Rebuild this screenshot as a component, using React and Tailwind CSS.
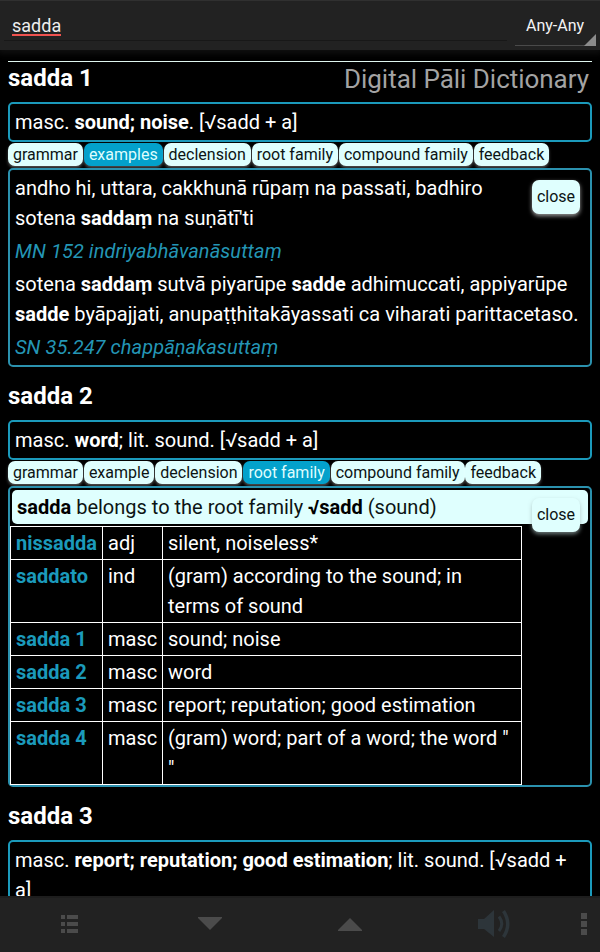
import React from "react";

function Heading({ children, className = "" }) {
  return <h3 className={`text-[24px] leading-[30px] font-bold text-white ${className}`}>{children}</h3>;
}

function Summary({ children }) {
  return (
    <div className="rounded-[5px] border-2 border-[#1b9abb] px-[5px] py-[3px] text-[20px] leading-[30px]">
      {children}
    </div>
  );
}

function Tabs({ items, active }) {
  return (
    <div className="mt-px mb-[2px] flex h-[23px] gap-[0.9px]">
      {items.map((t) => (
        <button
          key={t}
          className={`h-[23px] rounded-[7px] px-[5px] text-[16px] leading-[23px] whitespace-nowrap shadow-[0_2px_3px_rgba(255,255,255,0.3)] ${
            t === active ? "bg-[#03a1cb] text-[#dffdfd]" : "bg-[#dffffe] text-[#0c1414]"
          }`}
        >
          {t}
        </button>
      ))}
    </div>
  );
}

function Close({ className }) {
  return (
    <button
      className={`absolute right-[10px] flex h-[34px] w-[48px] items-start justify-center rounded-[7px] bg-[#dffffe] pt-[5px] text-[16px] leading-[24px] text-[#0c1414] ${className}`}
    >
      close
    </button>
  );
}

const rows = [
  ["nissadda", "adj", "silent, noiseless*"],
  ["saddato", "ind", "(gram) according to the sound; in terms of sound"],
  ["sadda 1", "masc", "sound; noise"],
  ["sadda 2", "masc", "word"],
  ["sadda 3", "masc", "report; reputation; good estimation"],
  ["sadda 4", "masc", '(gram) word; part of a word; the word " "'],
];

export default function App() {
  return (
    <div className="flex h-[952px] w-[600px] flex-col overflow-hidden bg-black font-['Roboto','Noto_Sans',sans-serif] text-white">
      <header className="relative z-10 flex h-[50px] shrink-0 border-t border-[#303030] bg-[#222222] shadow-[0_2px_6px_2px_rgba(34,34,34,0.45)]">
        <div className="ml-1 flex h-[40px] w-[503px] border-b border-[#181818] pt-[13px] pl-2">
          <span className="h-[22px] border-b-2 border-[#ef5350] text-[18px] leading-[24px] text-[#eeeeee]">sadda</span>
        </div>
        <div className="relative ml-2 h-[45px] w-[81px] border-b border-[#4a4a4a] pt-[13px] pl-[11px] text-[16px] leading-[24px] whitespace-nowrap text-[#f4f4f4]">
          Any-Any
          <svg className="absolute right-0 -bottom-px" width="12" height="12" viewBox="0 0 12 12">
            <path d="M12 0V12H0Z" fill="#8c8c8c" />
          </svg>
        </div>
      </header>

      <main className="min-h-0 flex-1 overflow-hidden px-2 pt-[11px]">
        <div className="flex h-[41px] justify-between border-t border-[#dff5ee]">
          <Heading className="pt-[1px]">sadda 1</Heading>
          <span className="pt-[2px] pr-[3px] text-[26px] leading-[30px] tracking-[-0.03px] text-[#a3a3a3]">Digital Pāli Dictionary</span>
        </div>
        <Summary>
          masc. <b>sound; noise</b>. [√sadd + a]
        </Summary>
        <Tabs
          items={["grammar", "examples", "declension", "root family", "compound family", "feedback"]}
          active="examples"
        />
        <section className="relative flex flex-col gap-[3px] rounded-[5px] border-2 border-[#2b91ae] px-[5px] py-[3px] text-[20px] leading-[30px]">
          <p className="pr-[70px]">
            andho hi, uttara, cakkhunā rūpaṃ na passati, badhiro
            <br />
            sotena <b>saddaṃ</b> na suṇātī'ti
          </p>
          <p className="tracking-[0.08px] text-[#2496b5] italic">MN 152 indriyabhāvanāsuttaṃ</p>
          <p className="whitespace-nowrap">
            sotena <b>saddaṃ</b> sutvā piyarūpe <b>sadde</b> adhimuccati, appiyarūpe
            <br />
            <b>sadde</b> byāpajjati, anupaṭṭhitakāyassati ca viharati parittacetaso.
          </p>
          <p className="tracking-[0.08px] text-[#2496b5] italic">SN 35.247 chappāṇakasuttaṃ</p>
          <Close className="top-[10px] shadow-[0_2px_4px_rgba(255,255,255,0.6)]" />
        </section>

        <Heading className="mt-[14px] mb-[9px]">sadda 2</Heading>
        <Summary>
          masc. <b>word</b>; lit. sound. [√sadd + a]
        </Summary>
        <Tabs
          items={["grammar", "example", "declension", "root family", "compound family", "feedback"]}
          active="root family"
        />
        <section className="relative rounded-[5px] border-2 border-[#2b91ae] text-[20px] leading-[30px]">
          <p className="mx-[2px] mt-[2px] mb-[2px] h-[34px] rounded-[5px] bg-[#dffffe] px-[5px] py-[2px] text-[#0c1414]">
            <b className="text-black">sadda</b> belongs to the root family <b className="text-black">√sadd</b> (sound)
          </p>
          <table className="w-[512px] table-fixed border-separate border-spacing-0 border-t border-l border-white">
            <colgroup>
              <col className="w-[92px]" />
              <col className="w-[60px]" />
              <col />
            </colgroup>
            <tbody>
              {rows.map(([word, pos, meaning]) => (
                <tr key={word} className="align-top">
                  <th className="border-r border-b border-white py-px pl-[5px] text-left font-bold text-[#1b9abb]">{word}</th>
                  <td className="border-r border-b border-white py-px pl-[5px]">{pos}</td>
                  <td className="border-r border-b border-white px-[5px] py-px">{meaning}</td>
                </tr>
              ))}
            </tbody>
          </table>
          <Close className="top-[10px] shadow-[0_2px_4px_rgba(160,180,180,0.7)]" />
        </section>

        <Heading className="mt-[14px] mb-[9px]">sadda 3</Heading>
        <Summary>
          masc. <b>report; reputation; good estimation</b>; lit. sound. [√sadd + a]
        </Summary>
      </main>

      <footer className="relative h-[56px] shrink-0 border-t-2 border-[#1d1d1d] bg-[#222222]">
        <svg className="-mt-[2px]" width="600" height="56" viewBox="0 0 600 56" fill="#4b4b4b">
          <path d="M61 19h4v4h-4zM67 19h11v4H67zM61 26h4v4h-4zM67 26h11v4H67zM61 33h4v4h-4zM67 33h11v4H67z" />
          <path d="M198 21H222V22L210 34L198 22Z" />
          <path d="M338 35H362V34L350 22L338 34Z" />
          <g fill="#2d353a">
            <path d="M478 23H484L494 14V41L484 33H478Z" />
            <path d="M499 20.5Q504.500 28 499 35" fill="none" stroke="#2d353a" strokeWidth="3" />
            <path d="M503.500 15Q512 28 503.500 41" fill="none" stroke="#2d353a" strokeWidth="3.5" />
          </g>
          <path d="M581 17h6v6h-6zM581 25h6v6h-6zM581 33h6v6h-6z" />
        </svg>
      </footer>
    </div>
  );
}
